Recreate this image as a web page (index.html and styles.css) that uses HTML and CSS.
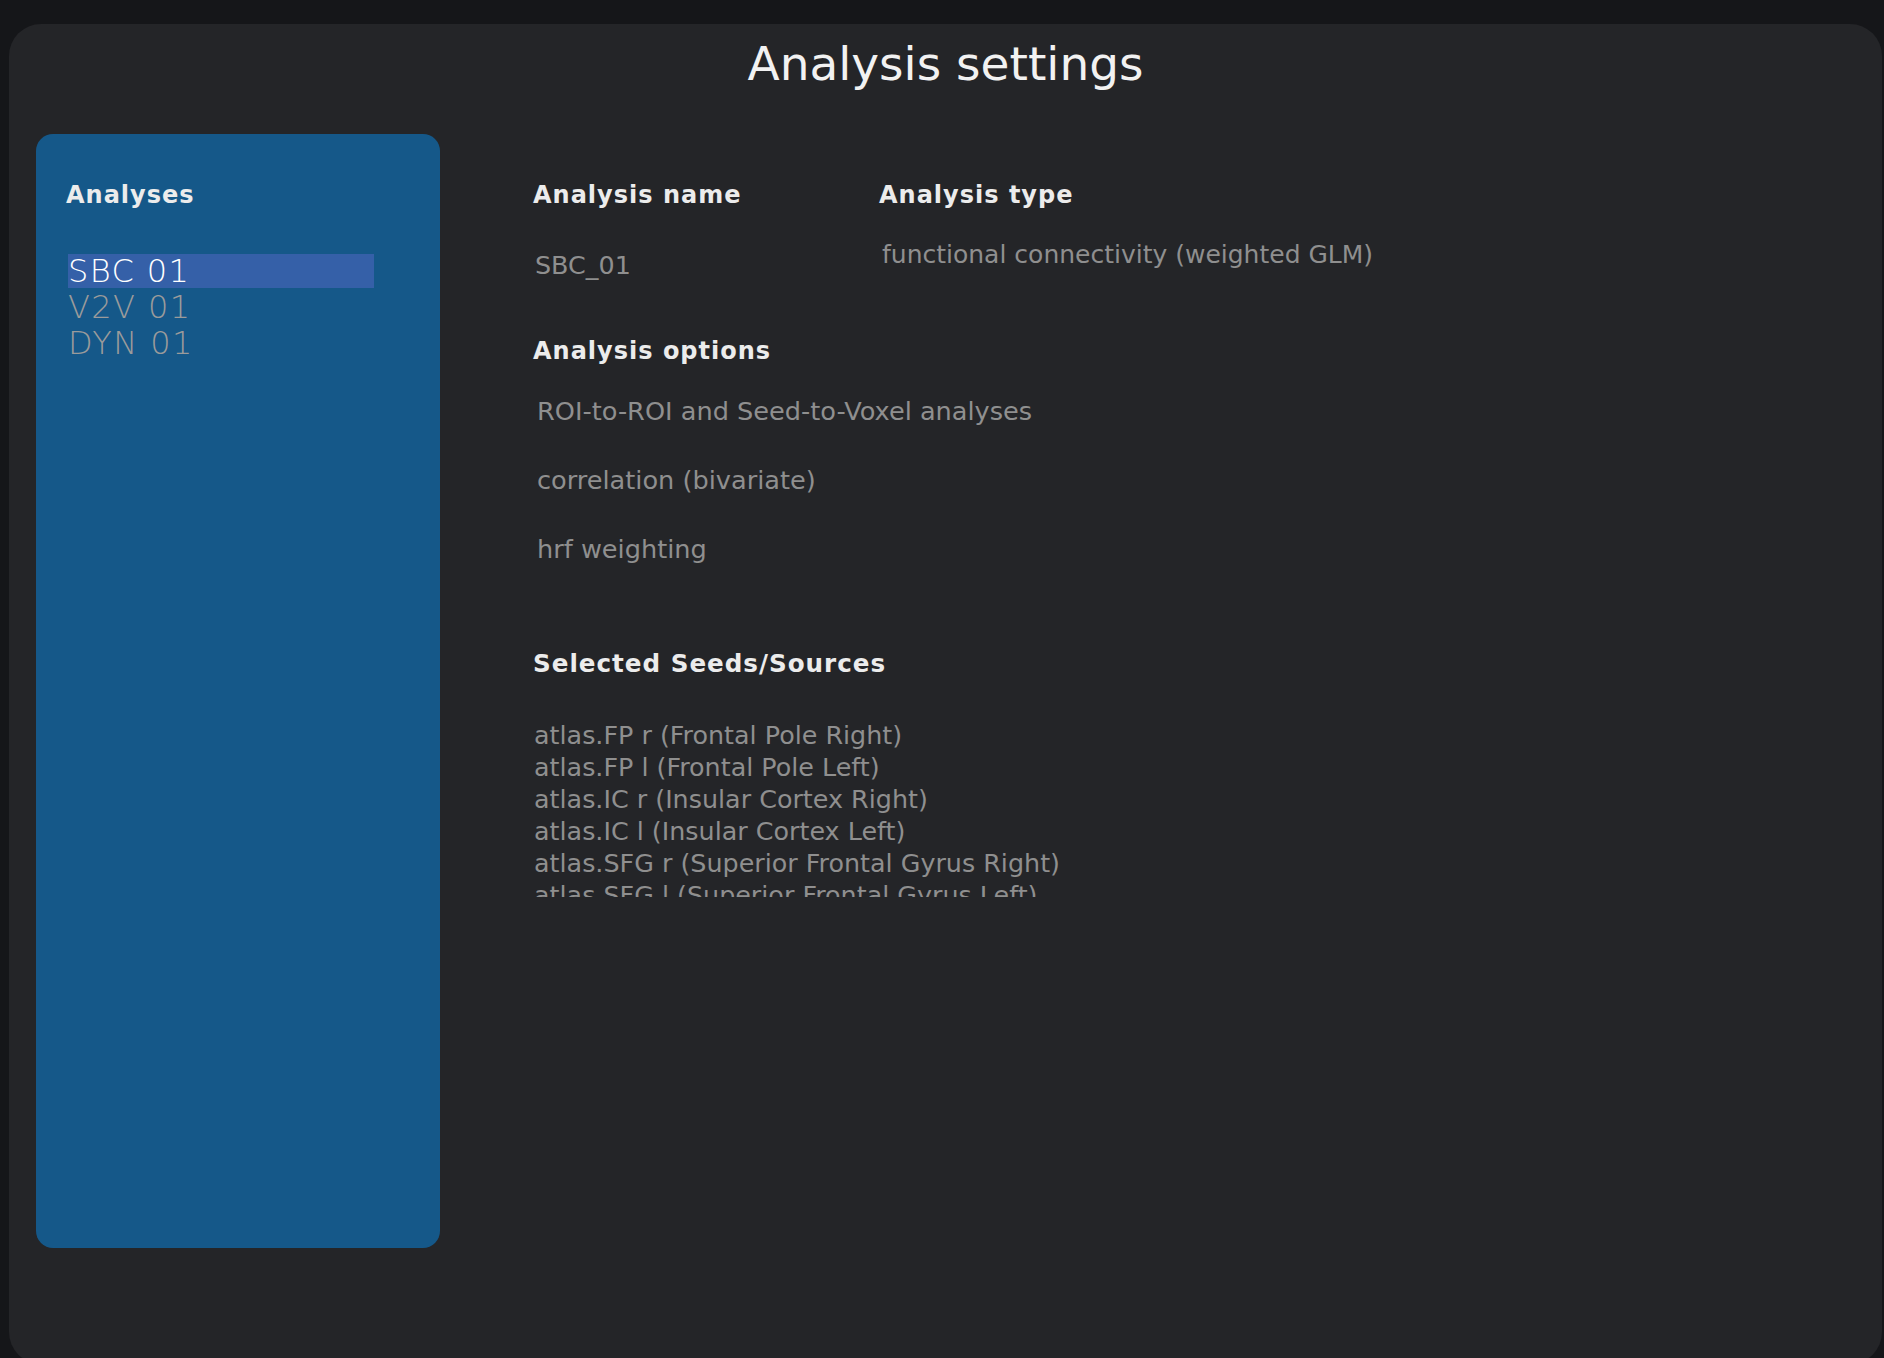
FILE: index.html
```html
<!DOCTYPE html>
<html lang="en">
<head>
<meta charset="utf-8">
<title>Analysis settings</title>
<link rel="stylesheet" href="styles.css">
</head>
<body>
<div class="window">
  <h1 class="title">Analysis settings</h1>
  <div class="body">
    <aside class="sidebar">
      <h2 class="heading">Analyses</h2>
      <ul class="list">
        <li class="item selected">SBC 01</li>
        <li class="item">V2V 01</li>
        <li class="item">DYN 01</li>
      </ul>
    </aside>
    <main class="content">
      <div class="row-top">
        <section class="field field-name">
          <h2 class="heading">Analysis name</h2>
          <div class="value name-value">SBC_01</div>
        </section>
        <section class="field field-type">
          <h2 class="heading">Analysis type</h2>
          <div class="value type-value">functional connectivity (weighted GLM)</div>
        </section>
      </div>
      <section class="options">
        <h2 class="heading">Analysis options</h2>
        <div class="option-list">
          <div class="value option">ROI-to-ROI and Seed-to-Voxel analyses</div>
          <div class="value option">correlation (bivariate)</div>
          <div class="value option">hrf weighting</div>
        </div>
      </section>
      <section class="seeds">
        <h2 class="heading seeds-heading">Selected Seeds/Sources</h2>
        <div class="seed-list">
          <div class="value seed">atlas.FP r (Frontal Pole Right)</div>
          <div class="value seed">atlas.FP l (Frontal Pole Left)</div>
          <div class="value seed">atlas.IC r (Insular Cortex Right)</div>
          <div class="value seed">atlas.IC l (Insular Cortex Left)</div>
          <div class="value seed">atlas.SFG r (Superior Frontal Gyrus Right)</div>
          <div class="value seed">atlas.SFG l (Superior Frontal Gyrus Left)</div>
          <div class="value seed">atlas.MFG r (Middle Frontal Gyrus Right)</div>
        </div>
      </section>
    </main>
  </div>
</div>
</body>
</html>
```
FILE: styles.css
```css
html, body {
  margin: 0;
  padding: 0;
}
body {
  background: #151619;
  font-family: "DejaVu Sans", "Liberation Sans", sans-serif;
  height: 1358px;
  overflow: hidden;
}
.window {
  margin: 24px 2px 0 9px;
  height: 1340px;
  background: #242528;
  border-radius: 32px;
  padding: 12px 0 0 27px;
  box-sizing: border-box;
}
.title {
  margin: 0;
  font-size: 47px;
  line-height: 55px;
  font-weight: normal;
  color: #f2f2f2;
  text-align: center;
  padding-right: 27px;
}
.body {
  margin-top: 43px;
  display: flex;
  align-items: flex-start;
}
.heading {
  margin: 0;
  font-size: 24px;
  line-height: 28px;
  font-weight: bold;
  letter-spacing: 1px;
  color: #ececec;
}
.seeds-heading {
  font-size: 24.6px;
}
.sidebar {
  width: 404px;
  height: 1114px;
  background: #155889;
  border-radius: 17px;
  box-sizing: border-box;
  padding: 47px 0 0 30px;
  flex-shrink: 0;
}
.list {
  list-style: none;
  margin: 45px 0 0 2px;
  padding: 0;
}
.item {
  width: 306px;
  height: 34px;
  line-height: 34px;
  font-size: 32px;
  font-weight: 200;
  letter-spacing: 1.4px;
  color: #9b9b9b;
  margin-bottom: 2px;
  white-space: nowrap;
}
.item.selected {
  background: #3560a8;
  color: #ffffff;
}
.content {
  margin-left: 93px;
  padding-top: 47px;
  flex: 1;
}
.row-top {
  display: flex;
}
.field-name {
  width: 346px;
}
.value {
  font-size: 25.4px;
  line-height: 30px;
  color: #8f8f8f;
  white-space: nowrap;
}
.name-value {
  margin-top: 41px;
  padding-left: 2px;
}
.type-value {
  font-size: 25px;
  margin-top: 31px;
  padding-left: 3px;
}
.options {
  margin-top: 57px;
}
.option {
  font-size: 25.6px;
}
.option-list {
  margin-top: 31px;
  display: flex;
  flex-direction: column;
  gap: 39px;
  padding-left: 4px;
}
.seeds {
  margin-top: 86px;
}
.seed-list {
  margin-top: 41px;
  height: 178px;
  overflow: hidden;
  padding-left: 1px;
}
.seed {
  line-height: 32px;
}
```
